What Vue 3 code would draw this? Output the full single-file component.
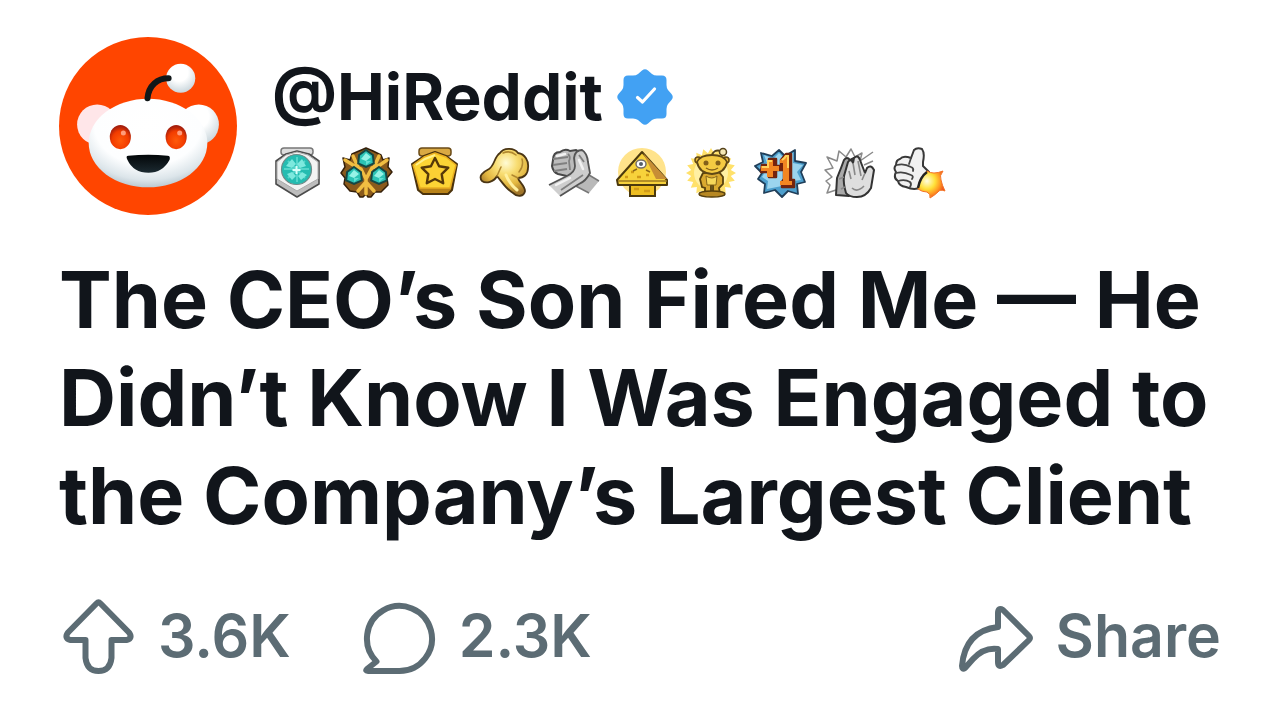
<script setup>
const title = 'The CEO’s Son Fired Me — He Didn’t Know I Was Engaged to the Company’s Largest Client'

const burst = (cx, cy, outer, inner, n) =>
  Array.from({ length: n * 2 }, (_, i) => {
    const r = i % 2 ? inner : outer
    const a = (Math.PI * i) / n - Math.PI / 2
    return `${(cx + r * Math.cos(a)).toFixed(1)},${(cy + r * Math.sin(a)).toFixed(1)}`
  }).join(' ')

const medalStar = burst(25, 24, 14, 7, 5)
const glow = burst(25, 25, 25, 20, 20)
const gems = [[25, 11], [13, 28], [38, 28]]
</script>

<template>
  <article class="post">
    <header class="head">
      <svg class="avatar" viewBox="0 0 177 177" role="img" aria-label="HiReddit avatar">
        <defs>
          <radialGradient id="face" cx=".5" cy=".3" r=".75">
            <stop offset="0" stop-color="#fff" />
            <stop offset=".6" stop-color="#fdfeff" />
            <stop offset=".82" stop-color="#dce5ea" />
            <stop offset="1" stop-color="#a9bac4" />
          </radialGradient>
          <radialGradient id="ball" cx=".45" cy=".3" r=".75">
            <stop offset=".4" stop-color="#fff" />
            <stop offset="1" stop-color="#c3d1d8" />
          </radialGradient>
          <radialGradient id="eye" cx=".5" cy=".65" r=".6">
            <stop offset="0" stop-color="#ff5a0a" />
            <stop offset=".65" stop-color="#f23c00" />
            <stop offset="1" stop-color="#a51f0d" />
          </radialGradient>
          <linearGradient id="mouth" x1="0" y1="0" x2="0" y2="1">
            <stop offset="0" stop-color="#020608" />
            <stop offset="1" stop-color="#1c2a31" />
          </linearGradient>
        </defs>
        <circle cx="88.5" cy="88.5" r="88.5" fill="#ff4500" />
        <circle cx="38" cy="87" r="20" fill="#ffe6e9" />
        <circle cx="139" cy="87" r="20" fill="url(#ball)" />
        <ellipse cx="88.5" cy="105.5" rx="59" ry="44" fill="url(#face)" />
        <circle cx="121" cy="41" r="14.5" fill="url(#ball)" />
        <path d="M88 61C89 48 98 41 109 41" fill="none" stroke="#111719" stroke-width="6" stroke-linecap="round" />
        <ellipse cx="61" cy="99.5" rx="10.5" ry="12" fill="url(#eye)" />
        <ellipse cx="116.5" cy="99.5" rx="10.5" ry="12" fill="url(#eye)" />
        <circle cx="64" cy="95.5" r="2.5" fill="#ff9c7b" />
        <circle cx="120" cy="95.5" r="2.5" fill="#ff9c7b" />
        <path d="M69 118Q89 116 108 118Q111 118 110 122Q103 135 89 135Q74 135 68 122Q66 118 69 118Z" fill="url(#mouth)" />
      </svg>

      <div class="who">
        <div class="name-row">
          <a class="name" href="#">@HiReddit</a>
          <svg class="verified" viewBox="0 0 56 56" role="img" aria-label="Verified">
            <path d="M25 1.5Q28-1 31 1.5L35 5Q37 6.5 40 6.5H45Q49.5 6.5 49.5 11V16Q49.5 19 51 21L54.5 25Q57 28 54.5 31L51 35Q49.5 37 49.5 40V45Q49.5 49.5 45 49.5H40Q37 49.5 35 51L31 54.5Q28 57 25 54.5L21 51Q19 49.5 16 49.5H11Q6.5 49.5 6.5 45V40Q6.5 37 5 35L1.5 31Q-1 28 1.5 25L5 21Q6.5 19 6.5 16V11Q6.5 6.5 11 6.5H16Q19 6.5 21 5Z" fill="#42a1f3" />
            <path d="M20.5 28.5L25.5 33L37.5 20" fill="none" stroke="#fff" stroke-width="3.2" stroke-linecap="round" stroke-linejoin="round" />
          </svg>
        </div>

        <div class="awards">
          <svg viewBox="0 0 50 50">
            <rect x="9" y="0" width="32" height="7" rx="3" fill="#ddd" stroke="#777" stroke-width="1.5" />
            <path d="M14 6L25 3L37 6L47 13V36L25 49L4 36V13Z" fill="#bdbdbd" stroke="#4c4c4c" stroke-width="1.6" stroke-linejoin="round" />
            <path d="M14 7L25 4L36 7L46 14V31L25 43L5 31V14Z" fill="#f3f3f3" stroke="#aaa" />
            <circle cx="24.5" cy="21.5" r="15" fill="#25bcb1" stroke="#6f8a88" stroke-width="1.2" />
            <path d="M25 9V34M12 21H37M16 13L33 30M33 13L16 30" stroke="#55d5ca" stroke-width="2" />
            <path d="M20 11L24 16L20 20L14 18ZM30 11L34 18L28 20L25 16ZM20 24L24 28L20 32L15 26ZM30 24L35 27L29 32L26 28Z" fill="#7de9de" />
            <path d="M24.5 18V26M20.5 22H28.5" stroke="#d7fffa" stroke-width="2" />
          </svg>

          <svg viewBox="0 0 50 50">
            <path d="M18 3L25 0L32 3L40 7L42 12L48 10L47 19L51 24L46 30L47 37L40 44L34 44L30 49H27L25 46L22 49H19L16 44L9 43L3 36L4 30L0 25L4 19L2 10L9 12L11 6Z" fill="#8a5a1c" stroke="#35200a" stroke-width="1.5" stroke-linejoin="round" />
            <path d="M4 12L12 17L20 21L25 31L31 20L39 17L46 12M25 30V46M25 34L17 43M25 34L33 43M12 8L17 19M38 8L33 19" fill="none" stroke="#f0bd42" stroke-width="3.5" stroke-linecap="round" />
            <g v-for="([x, y], i) in gems" :key="i">
              <polygon :points="burst(x, y, 9, 8, 3)" fill="#2cc3b5" stroke="#154744" stroke-width="2" />
              <path :d="`M${x - 5} ${y}L${x} ${y - 6}L${x + 5} ${y - 2}L${x} ${y + 2}Z`" fill="#97f3e7" />
              <path :d="`M${x} ${y + 2}V${y + 6}L${x + 5} ${y + 2}Z`" fill="#62e0d4" />
            </g>
          </svg>

          <svg viewBox="0 0 50 50">
            <rect x="9" y="0" width="32" height="8" rx="3" fill="#d9a943" stroke="#6b4b18" stroke-width="1.5" />
            <path d="M25 4L36 8L47 16L42 42L38 46H13L8 42L2 16L14 8Z" fill="#b98319" stroke="#4b330c" stroke-width="2" stroke-linejoin="round" />
            <path d="M25 5L36 9L46 17L40 40H10L3 17L14 9Z" fill="#fcd535" stroke="#e9ae20" stroke-width="1.5" stroke-linejoin="round" />
            <path d="M6 17L15 11L25 7" fill="none" stroke="#fff08a" stroke-width="2" />
            <polygon :points="medalStar" fill="#fbd034" stroke="#553909" stroke-width="2.4" stroke-linejoin="round" />
          </svg>

          <svg viewBox="0 0 50 50">
            <defs>
              <radialGradient id="hand" gradientUnits="userSpaceOnUse" cx="27" cy="15" r="32">
                <stop offset="0" stop-color="#fffbd5" />
                <stop offset=".35" stop-color="#f8dd72" />
                <stop offset=".7" stop-color="#e2b640" />
                <stop offset="1" stop-color="#a0752a" />
              </radialGradient>
            </defs>
            <path d="M21 5C24 0 35-1 39 5C46 6 50 13 49 20C49 26 45 30 39 30C40 34 46 38 46 43C45 49 38 49 34 45C27 41 23 34 18 28C15 34 7 36 3 33C-1 28 4 24 10 21C16 17 15 9 21 5Z" fill="url(#hand)" stroke="#4a3514" stroke-width="1.8" stroke-linejoin="round" />
            <path d="M18 28L22 19M39 30L33 27M24 5Q31 2 37 7M43 11Q45 18 40 24" fill="none" stroke="#b1882f" stroke-width="1.5" stroke-linecap="round" />
            <path d="M27 27Q30 35 38 42" fill="none" stroke="#fff0a0" stroke-width="3" stroke-linecap="round" />
          </svg>

          <svg viewBox="0 0 50 50">
            <path d="M27 27L37 24L51 33L41 45L23 35Z" fill="#b9b9b9" />
            <path d="M36 24L51 33M41 45L24 36" stroke="#777" stroke-width="1.5" />
            <path d="M5 12Q5 4 12 4Q17 0 22 3L28 2L34 5V22L23 29L10 26Q5 24 4 18Z" fill="#bcbcbc" stroke="#474747" stroke-width="2" />
            <path d="M29 5Q33 0 37 4Q42 9 40 15L42 25Q38 33 31 36L12 48L1 37L19 28Q27 24 27 18Z" fill="#cecece" />
            <path d="M1 37L19 28Q27 24 27 18L26 10Q27 2 34 2Q39 5 40 14L42 25Q38 33 31 36L12 48" fill="none" stroke="#555" stroke-width="1.8" />
            <path d="M5 11L20 9M5 17L19 15M6 23L19 21M20 6Q23 9 21 13L22 22M31 7L36 14M35 27L13 42" fill="none" stroke="#808080" stroke-width="1.8" />
            <path d="M9 8L17 6M31 12L35 21M8 37L22 30" stroke="#f2f2f2" stroke-width="2.5" stroke-linecap="round" />
          </svg>

          <svg viewBox="0 0 50 50">
            <circle cx="25" cy="24" r="24" fill="#ffe38b" />
            <path d="M13 36H38V48H13Z" fill="#edbd21" stroke="#4b390d" stroke-width="2" />
            <path d="M25 4L0 32L1 37H50V32Z" fill="#f7d23b" stroke="#4b390d" stroke-width="2" stroke-linejoin="round" />
            <path d="M26 5L39 31H50Z" fill="#c78e35" />
            <path d="M1 33H50" stroke="#9c7820" stroke-width="1.5" />
            <path d="M8 29H11M14 24H17M20 29H24M29 27H32M17 41H22M27 43H33" stroke="#d19b18" stroke-width="2.5" />
            <ellipse cx="24" cy="16" rx="5" ry="4" fill="#fff" stroke="#77706a" stroke-width="1.5" />
            <circle cx="24" cy="16" r="2" fill="#55606a" />
            <path d="M16 23L20 21M29 22L33 24" stroke="#8c671a" stroke-width="1.5" />
          </svg>

          <svg viewBox="0 0 50 50">
            <polygon :points="glow" fill="#ffe16b" />
            <circle cx="25" cy="25" r="17" fill="#fff0a3" />
            <path d="M26 8Q27 1 35 3" fill="none" stroke="#54421a" stroke-width="2" />
            <circle cx="37" cy="4" r="3.5" fill="#f4e8b6" stroke="#54421a" stroke-width="1.5" />
            <path d="M17 25L14 31L16 39L19 40L19 46H25V37L27 37V46H34L33 40L37 36V29L33 24Z" fill="#d9a92f" stroke="#58410d" stroke-width="1.8" />
            <path d="M20 28Q26 32 31 28L30 37H21Z" fill="#f6d75a" stroke="#876519" />
            <circle cx="12" cy="12" r="3" fill="#e6b73a" stroke="#604815" stroke-width="1.5" />
            <circle cx="40" cy="12" r="3" fill="#e6b73a" stroke="#604815" stroke-width="1.5" />
            <path d="M11 14Q14 7 26 7Q38 7 41 14Q39 25 26 26Q13 25 11 14Z" fill="#f4ca42" stroke="#604815" stroke-width="1.8" />
            <circle cx="20" cy="15" r="2.5" fill="#83601a" />
            <circle cx="32" cy="15" r="2.5" fill="#83601a" />
            <path d="M20 20Q26 24 32 20" fill="none" stroke="#83601a" stroke-width="1.5" />
            <ellipse cx="26" cy="46" rx="13" ry="3" fill="#b78823" stroke="#58410d" stroke-width="1.5" />
          </svg>

          <svg viewBox="0 0 50 50">
            <path d="M6 5L17 8L24 2L30 8L40 2L40 13L51 15L46 24L50 34L42 36L43 46L33 43L27 49L20 42L9 45L10 36L3 31L7 25L0 18L8 14Z" fill="#4d9fcd" stroke="#203e59" stroke-width="1.8" stroke-linejoin="round" />
            <path d="M9 7L18 11L24 5L30 11L38 5L38 15L48 17L42 24L46 32L38 33L36 39L27 38L12 41L13 33L7 29L10 24L4 19L12 15Z" fill="#9bd4ee" />
            <path d="M7 17H14V11L21 11V18H26V12L31 6H36V32H39V39H27V34L29 31V22H21V29H14V24H6Z" fill="#7c220d" stroke="#70240f" stroke-width="2.5" stroke-linejoin="round" />
            <path d="M6 18H12V12H18V18H24V23H18V29H12V23H6ZM25 12Q29 10 30 7H34V33H37V37H25V33H28V15H25Z" fill="#f28622" />
            <path d="M7 19H13V13H17M27 12Q30 10 31 8H33V20" fill="none" stroke="#ffd15b" stroke-width="2" />
          </svg>

          <svg viewBox="0 0 50 50">
            <path d="M12 42L3 45L6 37L2 33L8 29L1 22L9 20L3 9L13 13L15 3L22 9L27 1L31 9L38 5L36 13L49 4M40 17L49 13" fill="none" stroke="#8a8a8a" stroke-width="1.5" stroke-linejoin="round" />
            <path d="M12 47L13 30L17 20L20 12Q23 8 26 12L30 10L33 27L25 48Z" fill="#a9a9a9" stroke="#333" stroke-width="2" stroke-linejoin="round" />
            <path d="M22 45Q19 35 20 28L24 14Q27 10 29 15L30 10Q34 6 36 12L41 25L43 20Q47 16 50 22L47 40Q42 49 33 49Q25 49 22 45Z" fill="#dedede" stroke="#333" stroke-width="2" stroke-linejoin="round" />
            <path d="M29 15L31 27M34 13L37 28M25 23L27 31M41 25L38 32M15 31L20 29M17 41L21 39M28 40Q33 45 40 38" fill="none" stroke="#888" stroke-width="1.6" />
          </svg>

          <svg viewBox="0 0 50 50">
            <defs>
              <radialGradient id="flame" gradientUnits="userSpaceOnUse" cx="34" cy="33" r="18">
                <stop offset="0" stop-color="#fffde0" />
                <stop offset=".45" stop-color="#ffe13a" />
                <stop offset=".75" stop-color="#ff9821" />
                <stop offset="1" stop-color="#ec5420" />
              </radialGradient>
            </defs>
            <path d="M7 11Q10 7 18 10L21 2Q24-1 29 1Q32 5 30 14V18L36 24L28 39Q22 43 13 39Q6 38 5 33Q0 30 3 24Q0 20 3 17Q3 12 7 11Z" fill="#f1f1f1" stroke="#383838" stroke-width="2" stroke-linejoin="round" />
            <path d="M4 17Q11 15 18 19Q21 20 20 23M3 25Q10 23 18 27Q21 28 19 31M5 33Q12 31 17 34Q19 36 17 39M18 10L16 16" fill="none" stroke="#444" stroke-width="1.8" stroke-linecap="round" />
            <path d="M34 23Q40 27 50 23Q46 28 48 32Q49 37 52 43Q47 41 45 44Q42 47 37 50Q38 46 34 44Q29 44 25 41Q26 29 34 23Z" fill="url(#flame)" stroke="#f57325" />
            <path d="M34 24Q27 29 25 40" fill="none" stroke="#222" stroke-width="2.5" />
          </svg>
        </div>
      </div>
    </header>

    <h1 class="title">{{ title }}</h1>

    <footer class="actions">
      <button class="action" type="button" aria-label="Upvote, 3.6K">
        <svg viewBox="0 -2 78 78">
          <path d="M37.5 4.500Q39.500 2.500 41.500 4.500L70 33.500Q74 39 68 41H52.500V59Q51 72 39.500 72Q28 72 26.500 59V41H11Q5 39 9 33.500Z" />
        </svg>
        <span>3.6K</span>
      </button>
      <button class="action" type="button" aria-label="Comments, 2.3K">
        <svg viewBox="0 -2 78 78">
          <path d="M16.5 62.5A32.5 32.5 0 1 1 39.5 72H8Q5 72 7 70Z" />
        </svg>
        <span>2.3K</span>
      </button>
      <button class="action share" type="button">
        <svg viewBox="0 -2 78 78">
          <path d="M41 14Q41 8 46 11L72 37Q74 39 72 41L46 66Q41 69 41 63V50Q27 48 16 60L8 69Q5 71 5 67Q8 32 41 28Z" />
        </svg>
        <span>Share</span>
      </button>
    </footer>
  </article>
</template>

<style>
body {
  background: #fff;
}
</style>

<style scoped>
.post {
  padding: 37px 59px 32px;
  font-family: Inter, "Liberation Sans", sans-serif;
  color: #11151b;
}

.head {
  display: flex;
  align-items: flex-start;
  gap: 35px;
}

.avatar {
  flex: none;
  width: 178px;
  height: 178px;
}

.who {
  padding-top: 20px;
}

.name-row {
  display: flex;
  align-items: center;
  gap: 14px;
  height: 80px;
}

.name {
  font-size: 64px;
  line-height: 80px;
  font-weight: 700;
  color: inherit;
  text-decoration: none;
}

.verified {
  width: 56px;
  height: 56px;
}

.awards {
  display: flex;
  gap: 19px;
  margin-top: 11px;
}

.awards svg {
  width: 50px;
  height: 50px;
  overflow: visible;
}

.title {
  margin: 35px 0 0;
  font-size: 79px;
  line-height: 98px;
  font-weight: 700;
}

.actions {
  display: flex;
  align-items: center;
  gap: 69px;
  margin-top: 53px;
}

.action {
  display: flex;
  align-items: center;
  gap: 21px;
  padding: 0;
  border: 0;
  background: none;
  color: #5c6c74;
  font-family: inherit;
  font-size: 59px;
  line-height: 78px;
  font-weight: 600;
  cursor: pointer;
}

.action svg {
  width: 78px;
  height: 78px;
}

.action path {
  fill: none;
  stroke: currentColor;
  stroke-width: 6;
  stroke-linejoin: round;
}

.share {
  margin-left: auto;
}
</style>
